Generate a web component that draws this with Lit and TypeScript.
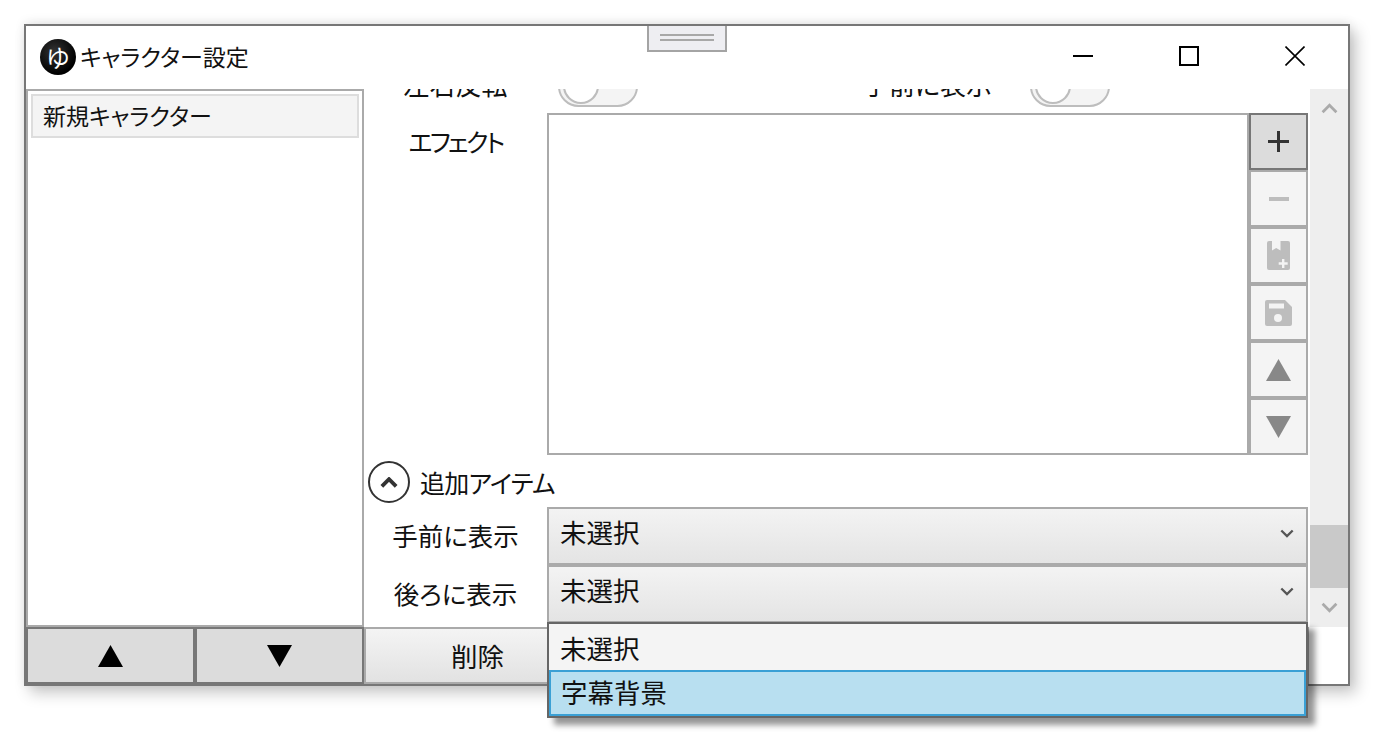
import { LitElement, html, css } from "lit";
import { customElement } from "lit/decorators.js";

const chev = (up: boolean, w: number, h: number, color: string, sw: number) => html`<svg width=${w} height=${h} viewBox="0 0 16 10" fill="none" stroke=${color} stroke-width=${sw}>
  <path d=${up ? "M1.5 8.5 L8 2 L14.5 8.5" : "M1.5 1.5 L8 8 L14.5 1.5"}></path></svg>`;
const tri = (up: boolean, color: string) => html`<svg width="25" height="22" viewBox="0 0 25 22" fill=${color}>
  <path d=${up ? "M12.5 0 L25 22 L0 22Z" : "M0 0 L25 0 L12.5 22Z"}></path></svg>`;

@customElement("app-root")
export class AppRoot extends LitElement {
  static styles = css`
    :host { display: block; width: 1380px; height: 738px; background: #fff; overflow: hidden;
      font-family: "Noto Sans CJK JP", "Noto Sans", sans-serif; font-feature-settings: "palt"; color: #111; }
    .stage { padding: 24px 0 0 24px; }
    .win { position: relative; box-sizing: border-box; width: 1326px; height: 662px; border: 2px solid #777; background: #fff;
      display: flex; flex-direction: column; box-shadow: 6px 7px 14px rgba(0,0,0,.22), 0 -2px 10px rgba(0,0,0,.08); }
    .handle { position: absolute; left: 621px; top: 0; width: 80px; height: 26px; box-sizing: border-box; background: #eeeef2;
      border: 2px solid #a4a4a4; border-top: 0; display: flex; flex-direction: column; align-items: center; gap: 3px; padding-top: 8px; }
    .handle i { display: block; width: 54px; height: 2px; background: #a8a8a8; }
    .title { height: 63px; flex: none; display: flex; align-items: center; padding-left: 14px; }
    .logo { width: 36px; height: 36px; margin-bottom: 2px; border-radius: 50%; background: radial-gradient(circle at 40% 35%, #333, #000 70%); color: #fff;
      display: flex; align-items: center; justify-content: center; font-size: 24px; line-height: 1; font-weight: 400; }
    .title-text { margin-left: 4px; margin-bottom: 2px; font-size: 23px; line-height: 1; }
    .wbtns { margin-left: auto; margin-bottom: 4px; display: flex; }
    .wbtn { width: 106px; height: 40px; display: flex; align-items: center; justify-content: center; }
    .body { flex: 1; display: flex; min-height: 0; }
    .left { width: 338px; flex: none; display: flex; flex-direction: column; }
    .list { flex: 1; box-sizing: border-box; border: 2px solid #aaa; padding: 3px; }
    .item { box-sizing: border-box; height: 44px; border: 2px solid #ddd; background: #f4f4f4; font-size: 23px; display: flex; align-items: center; padding: 0 0 2px 10px; }
    .lbtns { height: 57px; flex: none; display: flex; }
    .lbtn { flex: 1; box-sizing: border-box; background: #dcdcdc; border: 2px solid #777; display: flex; align-items: center; justify-content: center; }
    .right { flex: 1; display: flex; flex-direction: column; min-width: 0; }
    .upper { flex: 1; display: flex; min-height: 0; }
    .scroll { flex: 1; overflow: hidden; min-width: 0; }
    .inner { margin-top: -23px; padding-right: 2px; }
    .row { display: flex; align-items: center; }
    .lab { width: 183px; flex: none; text-align: center; font-size: 25.5px; line-height: 1.2; }
    .toggles { height: 40px; }
    .toggles .lab, .toggles .lab2 { font-size: 26px; padding-bottom: 5px; }
    .tog { position: relative; box-sizing: border-box; width: 80px; height: 41px; margin-left: 11px; border: 2px solid #bdbdbd; border-radius: 21px; background: #f4f4f4; flex: none; }
    .tog::after { content: ""; position: absolute; left: 3px; top: 0; width: 36px; height: 36px; box-sizing: border-box; background: #fff; border: 2px solid #bdbdbd; border-radius: 50%; }
    .lab2 { width: 205px; margin-left: 187px; text-align: center; line-height: 1.2; }
    .tog.second { margin-left: 0; }
    .effect { margin-top: 7px; height: 342px; align-items: stretch; }
    .effect .lab { padding-top: 13px; letter-spacing: -2.6px; font-size: 25px; }
    .box { flex: 1; box-sizing: border-box; border: 2px solid #aaa; }
    .tools { width: 59px; flex: none; display: flex; flex-direction: column; }
    .tool { flex: 1; box-sizing: border-box; background: #f4f4f4; border: 2px solid #aaa; display: flex; align-items: center; justify-content: center; }
    .tool.on { background: #dcdcdc; border-color: #777; }
    .acc { height: 52px; box-sizing: border-box; padding-top: 4px; padding-bottom: 2px; display: flex; align-items: center; padding-left: 4px; gap: 10px; font-size: 25px; letter-spacing: -0.7px; }
    .circ { width: 42px; height: 42px; flex: none; box-sizing: border-box; border: 2px solid #333; border-radius: 50%; display: flex; align-items: center; justify-content: center; }
    .sel-row { height: 58px; align-items: stretch; }
    .sel-row .lab { padding-top: 13px; }
    .sel { flex: 1; box-sizing: border-box; background: linear-gradient(#f3f3f3, #e4e4e4); border: 2px solid #aaa; display: flex; align-items: center; justify-content: space-between; padding: 0 12px 10px 11px; font-size: 26.5px; }
    .sel svg { margin-top: 5px; }
    .sbar { width: 38px; flex: none; background: #eee; display: flex; flex-direction: column; }
    .sbtn { height: 39px; flex: none; display: flex; align-items: center; justify-content: center; }
    .strack { flex: 1; display: flex; flex-direction: column; justify-content: flex-end; }
    .thumb { height: 63px; background: #c9c9c9; }
    .bottom { height: 57px; flex: none; padding-right: 39px; display: flex; }
    .del { flex: 1; box-sizing: border-box; background: linear-gradient(#f4f4f4, #e2e2e2); border: 2px solid #aaa; font-size: 26.5px; display: flex; align-items: center; padding-left: 85px; }
    .drop { position: absolute; left: 521px; top: 596px; width: 761px; box-sizing: border-box; border: 2px solid #666; background: #f4f4f4; padding-top: 1px; box-shadow: 7px 7px 6px rgba(0,0,0,.42); font-size: 26.5px; }
    .opt { height: 45px; box-sizing: border-box; display: flex; align-items: center; padding-left: 10px; border: 1px solid #f4f4f4; }
    .opt.hi { height: 46px; background: #b8dff0; border: 2px solid #3aa0d5; padding-left: 10px; padding-bottom: 4px; }
  `;

  render() {
    const grey = "#bdbdbd";
    return html`<div class="stage"><div class="win">
      <div class="handle"><i></i><i></i></div>
      <div class="title">
        <div class="logo">ゆ</div>
        <div class="title-text">キャラクター設定</div>
        <div class="wbtns">
          <div class="wbtn"><svg width="20" height="20"><rect y="9" width="20" height="2" fill="#000"/></svg></div>
          <div class="wbtn"><svg width="20" height="20"><rect x="1" y="1" width="18" height="18" fill="none" stroke="#000" stroke-width="2"/></svg></div>
          <div class="wbtn"><svg width="20" height="20" fill="none" stroke="#000" stroke-width="1.6"><path d="M0.5 0.5 L19.5 19.5 M19.5 0.5 L0.5 19.5"/></svg></div>
        </div>
      </div>
      <div class="body">
        <div class="left">
          <div class="list"><div class="item">新規キャラクター</div></div>
          <div class="lbtns">
            <div class="lbtn">${tri(true, "#000")}</div>
            <div class="lbtn">${tri(false, "#000")}</div>
          </div>
        </div>
        <div class="right">
          <div class="upper">
            <div class="scroll"><div class="inner">
              <div class="row toggles">
                <div class="lab">左右反転</div><div class="tog"></div>
                <div class="lab2">手前に表示</div><div class="tog second"></div>
              </div>
              <div class="row effect">
                <div class="lab">エフェクト</div>
                <div class="box"></div>
                <div class="tools">
                  <div class="tool on"><svg width="21" height="21" fill="#333"><path d="M9 0h3v21H9zM0 9h21v3H0z"/></svg></div>
                  <div class="tool"><svg width="20" height="4"><rect width="20" height="4" fill=${grey}/></svg></div>
                  <div class="tool"><svg width="23" height="29" viewBox="0 0 23 29" fill=${grey}>
                    <path d="M2 0h3v9.500l4.200-2.500 4.300 2.500V0H21a2 2 0 0 1 2 2v25a2 2 0 0 1-2 2H2a2 2 0 0 1-2-2V2a2 2 0 0 1 2-2z"/>
                    <path d="M15 18h2.400v3.300h3.300v2.400h-3.300V27H15v-3.300h-3.300v-2.400H15z" fill="#f4f4f4"/></svg></div>
                  <div class="tool"><svg width="27" height="26" viewBox="0 0 27 26" fill=${grey}>
                    <path d="M2 0h18l7 7v17a2 2 0 0 1-2 2H2a2 2 0 0 1-2-2V2a2 2 0 0 1 2-2z"/>
                    <rect x="4" y="3.500" width="15" height="5" fill="#f4f4f4"/><circle cx="13" cy="18" r="4" fill="#f4f4f4"/></svg></div>
                  <div class="tool">${tri(true, "#888")}</div>
                  <div class="tool">${tri(false, "#888")}</div>
                </div>
              </div>
              <div class="acc"><div class="circ">${chev(true, 18, 11, "#333", 3.5)}</div><span>追加アイテム</span></div>
              <div class="row sel-row"><div class="lab">手前に表示</div><div class="sel"><span>未選択</span>${chev(false, 14, 9, "#555", 2.6)}</div></div>
              <div class="row sel-row"><div class="lab">後ろに表示</div><div class="sel"><span>未選択</span>${chev(false, 14, 9, "#555", 2.6)}</div></div>
            </div></div>
            <div class="sbar">
              <div class="sbtn">${chev(true, 17, 11, "#aaa", 2.6)}</div>
              <div class="strack"><div class="thumb"></div></div>
              <div class="sbtn">${chev(false, 17, 11, "#aaa", 2.6)}</div>
            </div>
          </div>
          <div class="bottom"><div class="del">削除</div></div>
        </div>
      </div>
      <div class="drop">
        <div class="opt">未選択</div>
        <div class="opt hi">字幕背景</div>
      </div>
    </div></div>`;
  }
}
